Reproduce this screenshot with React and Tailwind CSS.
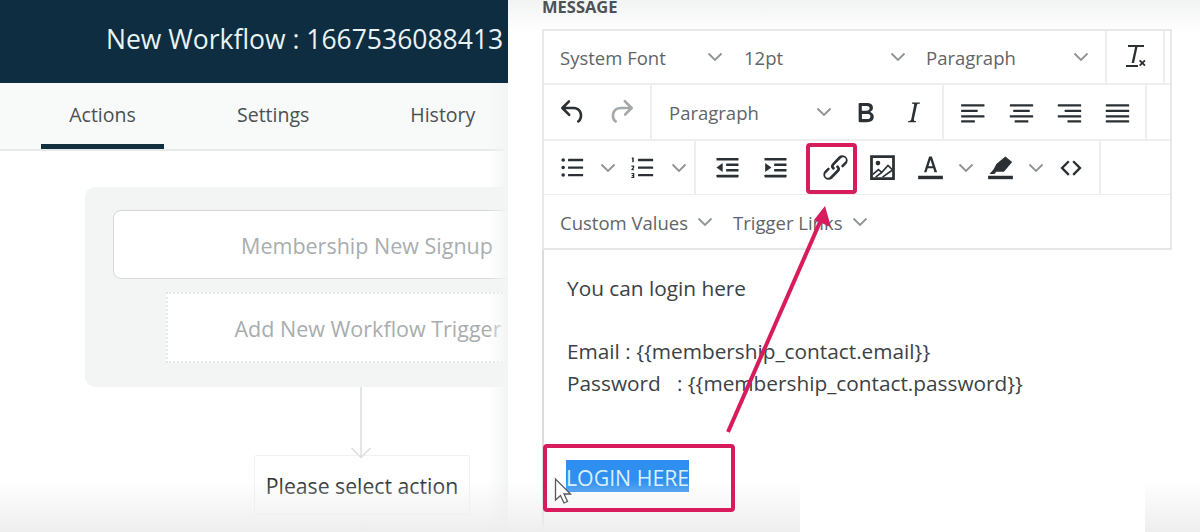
import React from 'react';

const Icon = ({ children, size = 33 }) => (
  <svg width={size} height={size} viewBox="0 0 24 24" fill="#2b3035" className="shrink-0">
    {children}
  </svg>
);

const Chevron = ({ className = '' }) => (
  <svg width="16" height="10" viewBox="0 0 16 10" fill="none" stroke="#8f9396" strokeWidth="1.8" className={`shrink-0 ${className}`}>
    <path d="M1.500 1.500 8 8l6.500-6.500" />
  </svg>
);

const Btn = ({ w = 'w-[48px]', children }) => (
  <div className={`${w} h-full flex items-center justify-center shrink-0`}>{children}</div>
);

const Menu = ({ w, label }) => (
  <div className={`${w} h-full flex items-center justify-between shrink-0 text-[18.500px] text-[#5f6569]`}>
    <span className="pt-[2px]">{label}</span>
    <Chevron />
  </div>
);

const Align = ({ rows }) => (
  <Icon>
    {rows.map((r, i) => (
      <rect key={i} x={r[0]} y={[6, 10, 14, 17.6][i]} width={r[1]} height="1.700" rx=".4" />
    ))}
  </Icon>
);

const Toolbar = () => (
  <div className="border-2 border-[#e6e8e9] border-b-0 mr-[28px] bg-white">
    {/* font row */}
    <div className="h-[54px] flex items-center pl-[16px] border-b-2 border-[#eceeef]">
      <Menu w="w-[163px]" label="System Font" />
      <div className="w-[21px]" />
      <Menu w="w-[162px]" label="12pt" />
      <div className="w-[20px]" />
      <Menu w="w-[163px]" label="Paragraph" />
      <div className="w-[16px]" />
      <div className="w-[60px] h-full border-l-2 border-r-2 border-[#eceeef] flex items-center justify-center shrink-0">
        <svg width="30" height="30" viewBox="0 0 30 30" fill="#2b3035">
          <path d="M8 3h16v2h-6.500L14 21h-2.400l3.500-16H8z" />
          <rect x="6" y="23" width="12" height="2" />
          <path d="m19 19 1.300-1.300 2 2 2-2L25.600 19l-2 2 2 2-1.300 1.300-2-2-2 2L19 23l2-2z" />
        </svg>
      </div>
    </div>
    {/* history, block, format, align */}
    <div className="h-[56px] flex items-center border-b-2 border-[#eceeef]">
      <div className="flex h-full w-[108px] border-r-2 border-[#eceeef] pl-[5px] shrink-0">
        <Btn>
          <Icon size={32}><path d="M6.400 8H12c3.700 0 6.200 2 6.800 5.100.6 2.700-.4 5.600-2.300 6.800a1 1 0 0 1-1-1.800c1.100-.7 1.800-2.700 1.400-4.600-.5-2.100-2.100-3.500-4.900-3.500H6.400l3.300 3.300a1 1 0 1 1-1.400 1.400l-5-5a1 1 0 0 1 0-1.400l5-5a1 1 0 0 1 1.400 1.400L6.400 8z" /></Icon>
        </Btn>
        <Btn>
          <Icon size={32}><path fill="#a4a8ab" d="M17.600 10H12c-2.800 0-4.400 1.400-4.900 3.500-.4 2 .3 4 1.400 4.600a1 1 0 1 1-1 1.800c-2-1.200-2.900-4.100-2.300-6.800.6-3 3-5.100 6.800-5.100h5.600l-3.300-3.300a1 1 0 1 1 1.400-1.400l5 5a1 1 0 0 1 0 1.400l-5 5a1 1 0 0 1-1.400-1.400l3.300-3.300z" /></Icon>
        </Btn>
      </div>
      <div className="flex h-full items-center w-[292px] border-r-2 border-[#eceeef] pl-[17px] shrink-0">
        <Menu w="w-[163px]" label="Paragraph" />
        <div className="w-[9px]" />
        <Btn>
          <Icon size={33}><path d="M7.800 19c-.3 0-.5 0-.6-.2l-.2-.5V5.700c0-.2 0-.4.2-.5l.6-.2h5c1.500 0 2.700.3 3.500 1 .7.6 1.100 1.400 1.100 2.500a3 3 0 0 1-.6 1.900c-.4.6-1 1-1.600 1.200.4.1.9.3 1.300.6s.8.7 1 1.200c.4.4.5 1 .5 1.600 0 1.300-.4 2.300-1.300 3-.8.7-2.100 1-3.800 1H7.800zm5-8.300c.6 0 1.200-.1 1.600-.5.4-.3.6-.7.6-1.300 0-1.100-.8-1.700-2.300-1.700H9.300v3.500h3.400zm.5 6c.7 0 1.300-.1 1.700-.4.4-.4.6-.9.6-1.500s-.2-1-.7-1.400c-.4-.3-1-.4-2-.4H9.400v3.800h4z" /></Icon>
        </Btn>
        <Btn>
          <Icon size={33}><path d="M16.700 4.700l-.1.900h-.3c-.6 0-1 0-1.400.3-.3.300-.4.600-.5 1.100l-2.100 9.800v.6c0 .5.400.8 1.400.8h.2l-.2.800H8l.2-.8h.2c1.100 0 1.800-.5 2-1.500l2-9.800.1-.5c0-.6-.4-.8-1.400-.8h-.3l.2-.9h5.800z" /></Icon>
        </Btn>
      </div>
      <div className="flex h-full w-[203px] border-r-2 border-[#eceeef] pl-[5px] shrink-0">
        <Btn><Align rows={[[3, 17], [3, 12], [3, 17], [3, 10]]} /></Btn>
        <Btn><Align rows={[[3.500, 17], [6, 12], [3.500, 17], [7, 10]]} /></Btn>
        <Btn><Align rows={[[3.500, 17], [8.500, 12], [3.500, 17], [10.500, 10]]} /></Btn>
        <Btn><Align rows={[[3.500, 17], [3.500, 17], [3.500, 17], [3.500, 17]]} /></Btn>
      </div>
    </div>
    {/* lists, link, media, color, code */}
    <div className="h-[54px] flex items-center border-b border-[#eceeef]">
      <div className="flex h-full items-center w-[152px] border-r-2 border-[#eceeef] pl-[5px] shrink-0">
        <Btn>
          <Icon>
            <circle cx="4.500" cy="6.500" r="1.300" /><circle cx="4.500" cy="12" r="1.300" /><circle cx="4.500" cy="17.500" r="1.300" />
            <rect x="8" y="5.700" width="11" height="1.700" rx=".4" /><rect x="8" y="11.200" width="11" height="1.700" rx=".4" /><rect x="8" y="16.700" width="11" height="1.700" rx=".4" />
          </Icon>
        </Btn>
        <Chevron className="ml-[3px]" />
        <div className="w-[3px]" />
        <Btn>
          <Icon>
            <path d="M3.600 4.700h1.300v3.500H3.800V5.600h-.4zM3.200 10.600h2v1.700l-1 .9h1v.8h-2v-.9l1-1v-.7h-1zM3.200 16h2.100v3.600H3.200v-.8h1.100v-.6h-.8v-.7h.8v-.7H3.200z" />
            <rect x="8" y="5.700" width="11" height="1.700" rx=".4" /><rect x="8" y="11.200" width="11" height="1.700" rx=".4" /><rect x="8" y="16.700" width="11" height="1.700" rx=".4" />
          </Icon>
        </Btn>
        <Chevron className="ml-[4px]" />
      </div>
      <div className="flex h-full w-[405px] border-r-2 border-[#eceeef] pl-[7px] items-center shrink-0">
        <Btn>
          <Icon>
            <rect x="4" y="5" width="16" height="1.900" rx=".4" /><rect x="11" y="9" width="9" height="1.900" rx=".4" /><rect x="11" y="13" width="9" height="1.900" rx=".4" /><rect x="4" y="17.300" width="16" height="1.900" rx=".4" />
            <path d="M8.500 8.800v6.400L4 12z" />
          </Icon>
        </Btn>
        <Btn>
          <Icon>
            <rect x="4" y="5" width="16" height="1.900" rx=".4" /><rect x="11" y="9" width="9" height="1.900" rx=".4" /><rect x="11" y="13" width="9" height="1.900" rx=".4" /><rect x="4" y="17.300" width="16" height="1.900" rx=".4" />
            <path d="M4.500 8.800v6.400L9 12z" />
          </Icon>
        </Btn>
        <div className="w-[12px]" />
        <Btn>
          <Icon><path d="M6.200 12.300a1 1 0 0 1 1.400 1.400l-2 2a2 2 0 1 0 2.600 2.800l4.800-4.800a1 1 0 0 0 0-1.400 1 1 0 1 1 1.400-1.300 2.900 2.900 0 0 1 0 4L9.600 20a3.900 3.900 0 0 1-5.500-5.500l2-2zm11.600-.6a1 1 0 0 1-1.400-1.400l2-2a2 2 0 1 0-2.600-2.800L11 10.300a1 1 0 0 0 0 1.400A1 1 0 1 1 9.600 13a2.900 2.900 0 0 1 0-4L14.400 4a3.900 3.900 0 0 1 5.500 5.500l-2 2z" /></Icon>
        </Btn>
        <div className="ml-[-1px]">
          <Btn>
            <Icon>
              <path fillRule="evenodd" d="M3 3h18v18H3zm2 2v14h14V5z" />
              <circle cx="8.700" cy="8.800" r="1.700" />
              <path fill="none" stroke="#2b3035" strokeWidth="1.200" d="M5 17l4-3.500 2.500 2L16 10.500l3.500 3.500M7 19l4.500-3.500M12 19l7-5" />
            </Icon>
          </Btn>
        </div>
        <Btn>
          <Icon>
            <rect x="3" y="18" width="18" height="2.500" />
            <path d="M11 4h2l3.800 11.500h-1.900l-.9-3H10l-.9 3H7.300zm1 2.300-1.500 4.700h3z" />
          </Icon>
        </Btn>
        <Chevron className="ml-[4px]" />
        <div className="w-[2px]" />
        <Btn>
          <Icon>
            <rect x="3" y="18" width="18" height="2.500" />
            <path d="m15.500 4 5 4-6 7H9l-1.500 1.800H4l3-3.600L9 9.500z" />
          </Icon>
        </Btn>
        <Chevron className="ml-[4px]" />
        <div className="w-[3px]" />
        <Btn>
          <Icon size={30}><path d="M9.600 5.900 3.500 12l6.100 6.100 1.300-1.300L6.200 12l4.700-4.800zm4.800 0-1.300 1.300 4.700 4.800-4.700 4.800 1.300 1.300 6.100-6.100z" /></Icon>
        </Btn>
      </div>
    </div>
    {/* custom values row */}
    <div className="h-[55px] flex items-center pl-[16px] border-b-2 border-[#e3e5e6] text-[18.500px] text-[#5f6569]">
      <span className="pt-[2px]">Custom Values</span>
      <Chevron className="ml-[9px]" />
      <span className="ml-[20px] pt-[2px]">Trigger Links</span>
      <Chevron className="ml-[9px]" />
    </div>
  </div>
);

const LeftPanel = () => (
  <div className="w-[508px] h-full overflow-hidden shrink-0 bg-white">
    <div className="h-[83px] bg-[#0e2d40] flex items-center pl-[106px] pb-[4px] text-[#e8f3f6] text-[26.500px] whitespace-nowrap">
      New Workflow : 1667536088413
    </div>
    <div className="h-[68px] bg-[#f8f9f9] border-b-2 border-[#e8eaea] flex items-end text-[19.500px] text-[#4b5053] font-medium">
      <div className="ml-[41px] w-[123px] h-[68px] pt-[5px] border-b-[5px] border-[#12303f] flex items-center justify-center">Actions</div>
      <div className="ml-[73px] h-[68px] flex items-center">Settings</div>
      <div className="ml-[101px] h-[68px] flex items-center">History</div>
    </div>
    <div className="ml-[85px] mt-[36px] w-[560px] h-[200px] bg-[#f3f5f4] rounded-[10px] pt-[23px] pl-[28px]">
      <div className="w-[508px] h-[69px] pt-[3px] bg-white border border-[#d6d8d8] rounded-[8px] flex items-center justify-center text-[21.500px] text-[#a9adae]">
        Membership New Signup
      </div>
      <div className="ml-[53px] mt-[13px] w-[404px] h-[71px] pt-[3px] bg-white border-2 border-dotted border-[#e2e5e4] flex items-center justify-center text-[21.500px] text-[#a9adae]">
        Add New Workflow Trigger
      </div>
    </div>
    <div className="w-[722px] flex justify-center">
      <svg width="22" height="72" viewBox="0 0 22 72" fill="none" stroke="#dcdedd" strokeWidth="1.500" className="block">
        <path d="M11 0v70M1.500 61l9.500 9.500 9.500-9.500" />
      </svg>
    </div>
    <div className="ml-[254px] mt-[-4px] w-[216px] h-[60px] pt-[2px] border border-[#f0f1f1] rounded-[2px] flex items-center justify-center text-[21.200px] text-[#2c3033]">
      Please select action
    </div>
    <div className="ml-[360px] mt-[12px] w-[2px] h-[10px] bg-[#cfd1d1]" />
  </div>
);

export default function App() {
  return (
    <div className="relative w-[1200px] h-[532px] overflow-hidden bg-white flex" style={{ fontFamily: '"Open Sans", "Noto Sans", sans-serif' }}>
      <LeftPanel />
      <div className="flex-1 h-full pl-[34px] bg-gradient-to-b from-[#f2f3f3] to-white to-[6%]">
        <div className="h-[29px] flex items-start">
          <span className="text-[16.500px] font-bold text-[#4d5256] leading-[14px]">MESSAGE</span>
        </div>
        <Toolbar />
        <div className="border-l-2 border-[#d9dbdc] h-[290px] pl-[22px] pt-[22px] text-[20.800px] leading-[32px] text-[#3c4144]">
          <p className="pl-[1px]">You can login here</p>
          <p className="mt-[31px] pl-[1px]">Email : {'{{membership_contact.email}}'}</p>
          <p className="pl-[1px]">Password &nbsp; : {'{{membership_contact.password}}'}</p>
          <p className="mt-[61px] w-fit">
            <span className="bg-[#2f8ff0] text-[#d9f0fb] inline-block h-[32px] text-[21.300px] leading-[35px]">LOGIN HERE</span>
          </p>
        </div>
      </div>

      {/* soft shadow at panel edge and video fade at the bottom */}
      <div className="absolute left-[488px] top-[83px] w-[20px] h-[449px] bg-gradient-to-r from-transparent to-[#f3f4f4]" />
      <div className="absolute left-0 top-[480px] w-[800px] h-[52px] bg-gradient-to-b from-transparent to-[#eeeeee]" />
      <div className="absolute left-[1145px] top-[480px] w-[55px] h-[52px] bg-gradient-to-b from-transparent to-[#eeeeee]" />

      {/* red annotations */}
      <div className="absolute left-[806px] top-[143px] w-[51px] h-[51px] border-[4px] border-[#d81b5c] rounded-[4px]" />
      <div className="absolute left-[543px] top-[444px] w-[192px] h-[68px] border-[4px] border-[#d81b5c] rounded-[4px]" />
      <svg className="absolute left-0 top-0 pointer-events-none" width="1200" height="532" fill="none">
        <path d="M728 432 820 222" stroke="#d81b5c" strokeWidth="4" />
        <path d="M825 206 831 227 814 220z" fill="#d81b5c" />
        <path d="M555.500 479v21l5-4.500 3.500 7.500 3.500-1.500-3.500-7.500h6.500z" fill="#fff" stroke="#55595c" strokeWidth="1.300" />
      </svg>
    </div>
  );
}
